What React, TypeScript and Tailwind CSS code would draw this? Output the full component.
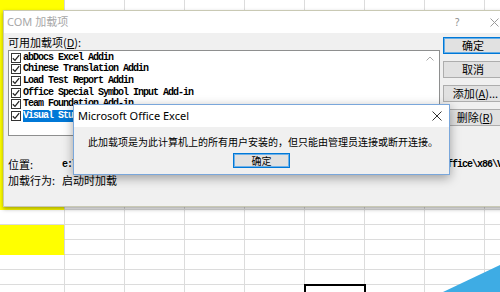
import React from "react";

const ROWS = 20;
const COLS = 9;

function isYellow(r: number, c: number) {
  if (c !== 0) return false;
  return r < 14 || r === 15 || r === 16;
}

function Sheet() {
  const cells: React.ReactNode[] = [];
  for (let r = 0; r < ROWS; r++) {
    for (let c = 0; c < COLS; c++) {
      cells.push(
        <div
          key={`${r}-${c}`}
          className={
            isYellow(r, c)
              ? "h-[15px] bg-[#ffff00] border-r border-r-[#d6d6d6] border-b border-b-[#ffff00]"
              : "h-[15px] bg-white border-r border-b border-[#dcdcdc]"
          }
        />
      );
    }
  }
  return (
    <div className="grid grid-cols-[65px_repeat(8,60px)] w-[545px]">{cells}</div>
  );
}

function Check() {
  return (
    <div className="w-[10px] h-[10px] border border-[#333] bg-white flex items-center justify-center shrink-0">
      <svg width="8" height="8" viewBox="0 0 8 8">
        <path d="M0.8 4.2 L3 6.4 L7.2 1.2" fill="none" stroke="#222" strokeWidth="1.3" />
      </svg>
    </div>
  );
}

const items = [
  "abDocs Excel Addin",
  "Chinese Translation Addin",
  "Load Test Report Addin",
  "Office Special Symbol Input Add-in",
  "Team Foundation Add-in",
  "Visual Studio Tools for Office Design-Time Adaptor for Excel",
];

const mono = {
  fontFamily: '"Liberation Mono", "DejaVu Sans Mono", monospace',
};

function Btn({ label, def }: { label: React.ReactNode; def?: boolean }) {
  return (
    <div
      className={
        def
          ? "h-[17px] w-[60px] bg-[#e1e1e1] border border-[#0078d7] shadow-[inset_0_0_0_1px_#66aee6] flex items-center justify-center text-[11px] text-black whitespace-nowrap"
          : "h-[17px] w-[60px] bg-[#e1e1e1] border border-[#adadad] flex items-center justify-center text-[11px] text-black whitespace-nowrap"
      }
    >
      {label}
    </div>
  );
}

export default function App() {
  return (
    <div
      className="relative w-[500px] h-[292px] overflow-hidden bg-white"
      style={{ fontFamily: '"Noto Sans CJK SC", "Noto Sans", sans-serif' }}
    >
      <Sheet />

      {/* selected cell */}
      <div className="absolute left-[304px] top-[284px] w-[62px] h-[16px] border-2 border-black" />

      {/* blue corner */}
      <svg className="absolute right-0 bottom-0" width="60" height="30" viewBox="0 0 60 30">
        <polygon points="3,30 60,3 60,30" fill="#3eace4" />
      </svg>

      {/* COM dialog */}
      <div className="absolute left-[3px] top-[10px] w-[512px] h-[197px] border border-[#c9c9b4] bg-[#f0f0f0] shadow-[0_2px_4px_rgba(0,0,0,0.35)] flex flex-col">
        <div className="h-[22px] bg-white flex items-center pl-[3px] relative">
          <span className="text-[11px] text-[#a8a8a8]" style={{ fontFamily: '"Noto Sans", "Noto Sans CJK SC", sans-serif' }}>
            COM 加载项
          </span>
          <span className="absolute left-[451px] top-[4px] text-[10px] text-[#8a8a8a]" style={{ fontFamily: '"Noto Sans", sans-serif' }}>?</span>
          <svg className="absolute left-[486px] top-[7px]" width="9" height="9" viewBox="0 0 9 9">
            <path d="M0.5 0.5 L8.5 8.5 M8.5 0.5 L0.5 8.5" stroke="#9a9a9a" strokeWidth="1" />
          </svg>
        </div>
        <div className="flex-1 flex">
          <div className="w-[436px] shrink-0 pl-[4px] flex flex-col">
            <div className="h-[16px] leading-[16px] text-[11px] text-black mt-[1px]">
              可用加载项(<span className="underline">D</span>):
            </div>
            <div className="w-[432px] h-[86px] border border-[#8e8f8f] bg-white flex">
              <div className="flex-1 flex flex-col pt-[1px] overflow-hidden">
                {items.map((t, i) => (
                  <div key={t} className="h-[11.6px] flex items-center pl-[2px] gap-[2px]">
                    <Check />
                    <span
                      className={
                        i === 5
                          ? "text-[10px] font-bold leading-[12px] h-[12px] bg-[#0078d7] text-white whitespace-nowrap tracking-[-1px]"
                          : "text-[10px] font-bold leading-[12px] text-black whitespace-nowrap tracking-[-1px]"
                      }
                      style={mono}
                    >
                      {t}
                    </span>
                  </div>
                ))}
              </div>
              <div className="w-[18px] flex justify-center pt-[5px]">
                <svg width="8" height="5" viewBox="0 0 8 5">
                  <path d="M0.5 4.5 L4 1 L7.5 4.5" fill="none" stroke="#a8a8a8" strokeWidth="1" />
                </svg>
              </div>
            </div>
            <div className="mt-[20px] flex h-[16px] items-center whitespace-nowrap">
              <span className="w-[54px] shrink-0 text-[11px] text-black">位置:</span>
              <span className="shrink-0 text-[10px] font-bold text-black whitespace-nowrap tracking-[-1px]" style={mono}>
                {"e:\\Program Files (x86)\\Microsoft Visual Studio 14.0\\Visual Studio Tools for Office\\x86\\VSTOExcelAdaptor.dll"}
              </span>
            </div>
            <div className="flex h-[16px] items-center whitespace-nowrap">
              <span className="w-[54px] shrink-0 text-[11px] text-black">加载行为:</span>
              <span className="text-[11px] text-black">启动时加载</span>
            </div>
          </div>
          <div className="ml-[3px] pt-[4px] flex flex-col gap-[7px]">
            <Btn label="确定" def />
            <Btn label="取消" />
            <Btn label={<span className="pl-[5px]">添加(<span className="underline">A</span>)...</span>} />
            <Btn label={<span className="pl-[4px]">删除(<span className="underline">R</span>)</span>} />
          </div>
        </div>
      </div>

      {/* Message box */}
      <div className="absolute left-[73px] top-[104px] w-[377px] h-[71px] border border-[#7aa7db] bg-[#f0f0f0] shadow-[0_3px_10px_rgba(0,0,0,0.35)] flex flex-col">
        <div className="h-[22px] bg-white flex items-center pl-[4px] relative">
          <span className="text-[11px] text-black" style={{ fontFamily: '"Noto Sans", sans-serif' }}>
            Microsoft Office Excel
          </span>
          <svg className="absolute right-[7px] top-[6px]" width="10" height="10" viewBox="0 0 10 10">
            <path d="M0.5 0.5 L9.5 9.5 M9.5 0.5 L0.5 9.5" stroke="#333" strokeWidth="1" />
          </svg>
        </div>
        <div className="flex-1 flex flex-col pt-[8px]">
          <div className="pl-[14px] h-[14px] leading-[14px] text-[10px] text-black whitespace-nowrap">
            此加载项是为此计算机上的所有用户安装的，但只能由管理员连接或断开连接。
          </div>
          <div className="mt-[4px] self-center w-[57px] h-[15px] bg-[#e1e1e1] border border-[#0078d7] shadow-[inset_0_0_0_1px_#6fb1e8] flex items-center justify-center text-[10px] text-black">
            确定
          </div>
        </div>
      </div>
    </div>
  );
}
